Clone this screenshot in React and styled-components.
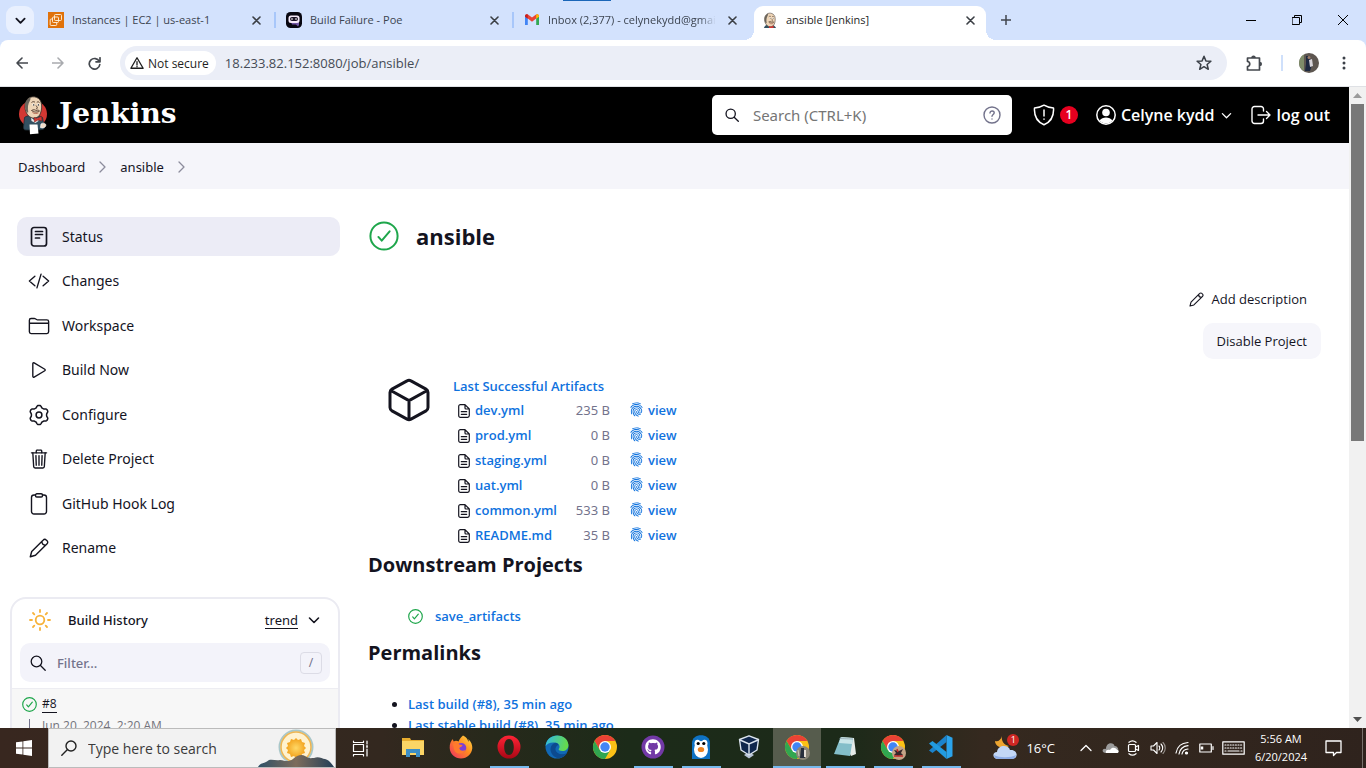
import React from "react";
import styled, { createGlobalStyle, css } from "styled-components";
import {
  IoCodeSlashOutline,
  IoFolderOutline,
  IoPlayOutline,
  IoTrashOutline,
  IoFingerPrint,
} from "react-icons/io5";
import { FaGithub } from "react-icons/fa";

const Global = createGlobalStyle`
  *, *::before, *::after { box-sizing: border-box; }
  body { margin: 0; font-family: "Noto Sans", "Open Sans", sans-serif; color: #14141f; background: #fff; }
  button { font: inherit; color: inherit; background: none; border: 0; padding: 0; cursor: pointer; }
  input { font: inherit; color: inherit; background: none; border: 0; padding: 0; outline: 0; min-width: 0; }
  a { color: inherit; text-decoration: none; }
  svg { display: block; flex: none; }
`;

const Screen = styled.div`
  display: flex;
  flex-direction: column;
  height: 100vh;
  overflow: hidden;
`;

/* ---------- Browser frame ---------- */
const chromeFont = css`
  font-family: "Open Sans", "Noto Sans", sans-serif;
`;
const TabStrip = styled.div`
  ${chromeFont}
  position: relative;
  display: flex;
  align-items: flex-end;
  height: 40px;
  padding-left: 6px;
  background: #d3e2fd;
  flex: none;
`;
const LoadingEdge = styled.span`
  position: absolute;
  top: 0;
  left: 563px;
  width: 48px;
  height: 1px;
  background: #1a66b8;
`;
const TabSearch = styled.button`
  display: grid;
  place-items: center;
  width: 28px;
  height: 28px;
  margin: 0 6px 6px 0;
  border-radius: 9px;
  background: #e9f0fe;
`;
const Tab = styled.div`
  position: relative;
  display: flex;
  align-items: center;
  gap: 8px;
  flex: 0 1 232px;
  min-width: 0;
  height: 34px;
  padding: 0 8px 6px;
  color: #3c4450;
  ${(p) =>
    p.$active &&
    css`
      background: #fff;
      color: #1f1f1f;
      border-radius: 9px 9px 0 0;
      &::before, &::after {
        content: "";
        position: absolute;
        bottom: 0;
        width: 10px;
        height: 10px;
      }
      &::before { left: -10px; background: radial-gradient(circle at 0 0, transparent 10px, #fff 10px); }
      &::after { right: -10px; background: radial-gradient(circle at 100% 0, transparent 10px, #fff 10px); }
    `}
`;
const TabTitle = styled.span`
  flex: 1;
  min-width: 0;
  overflow: hidden;
  white-space: nowrap;
  font-size: 11px;
  line-height: 18px;
  ${(p) => p.$fade && "mask-image: linear-gradient(90deg, #000 90%, transparent);"}
`;
const TabGap = styled.span`
  width: 6px;
  height: 28px;
  flex: none;
  margin-bottom: 6px;
  padding: 6px 2px;
  &::before {
    content: "";
    display: block;
    width: 2px;
    height: 16px;
    background: ${(p) => (p.$line ? "#a8c7fa" : "transparent")};
  }
`;
const PlainButton = styled.button`
  display: grid;
  place-items: center;
  flex: none;
  width: ${(p) => p.$w || 16}px;
  height: ${(p) => p.$h || 16}px;
`;
const NewTab = styled(PlainButton)`
  margin: 0 0 6px 6px;
`;
const WindowButtons = styled.div`
  display: flex;
  margin-left: auto;
`;
const Toolbar = styled.div`
  ${chromeFont}
  background: #d3e2fd;
  flex: none;
`;
const ToolbarInner = styled.div`
  display: flex;
  align-items: center;
  height: 47px;
  padding: 0 4px 0 8px;
  background: #fff;
  border-bottom: 1px solid #dfe1e5;
  border-radius: 8px 8px 0 0;
`;
const NavButton = styled(PlainButton)`
  width: 28px;
  height: 28px;
  margin-right: 8px;
`;
const Omnibox = styled.div`
  display: flex;
  align-items: center;
  flex: 1;
  height: 34px;
  margin-left: 4px;
  padding: 0 15px 0 5px;
  border-radius: 17px;
  background: #ebeef7;
`;
const Secure = styled.button`
  display: flex;
  align-items: center;
  gap: 4px;
  height: 24px;
  padding: 0 7px 0 5px;
  border-radius: 12px;
  background: #fff;
  font-size: 12px;
  color: #1f1f1f;
  white-space: nowrap;
`;
const Url = styled.input`
  flex: 1;
  margin-left: 9px;
  font-size: 13px;
  color: #454b55;
`;
const ToolbarLine = styled.span`
  width: 2px;
  height: 16px;
  margin-right: 9px;
  background: #cfe0fb;
`;

/* ---------- Page frame ---------- */
const Viewport = styled.div`
  display: flex;
  flex: 1;
  min-height: 0;
`;
const Page = styled.div`
  flex: 1;
  min-width: 0;
  overflow: hidden;
`;
const Scrollbar = styled.div`
  display: flex;
  flex-direction: column;
  align-items: center;
  width: 17px;
  flex: none;
  background: #f1f1f1;
`;
const ScrollThumb = styled.span`
  flex: 5;
  width: 13px;
  background: #787878;
`;
const ScrollRest = styled.span`
  flex: 4;
`;

/* ---------- Jenkins header ---------- */
const Header = styled.header`
  display: flex;
  align-items: center;
  height: 56px;
  padding: 0 19px 0 18px;
  background: #000;
  color: #fff;
`;
const Brand = styled.a`
  display: flex;
  align-items: center;
  gap: 10px;
  margin-right: auto;
  font: bold 28px/32px "DejaVu Serif", "Liberation Serif", serif;
`;
const BrandName = styled.span`
  padding-bottom: 3px;
`;
const HeaderSearch = styled.div`
  display: flex;
  align-items: center;
  flex: 0 1 300px;
  height: 40px;
  padding: 0 11px 0 13px;
  border-radius: 5px;
  background: #fff;
  color: #14141f;
`;
const HeaderInput = styled.input`
  flex: 1;
  margin-left: 14px;
  font-size: 15px;
  &::placeholder { color: #757575; opacity: 1; }
`;
const HeaderLink = styled.a`
  display: flex;
  align-items: center;
  gap: 5px;
  margin-left: ${(p) => p.$ml}px;
  ${chromeFont}
  font-size: 16px;
  line-height: 24px;
  font-weight: 600;
  white-space: nowrap;
`;
const Badge = styled.span`
  width: 18px;
  height: 18px;
  border-radius: 9px;
  background: #e6001f;
  font-size: 12px;
  line-height: 18px;
  text-align: center;
`;
const Crumbs = styled.nav`
  display: flex;
  align-items: center;
  gap: 14px;
  height: 46px;
  padding: 2px 18px 0;
  background: #f5f5fa;
  font-size: 13px;
  line-height: 20px;
`;
const Body = styled.div`
  display: flex;
  align-items: flex-start;
`;

/* ---------- Side panel ---------- */
const Side = styled.aside`
  flex: none;
  width: 340px;
  padding: 28px 0 0 10px;
`;
const SideNav = styled.nav`
  display: flex;
  flex-direction: column;
  justify-content: space-between;
  min-height: 351px;
  margin-left: 7px;
`;
const SideLink = styled.a`
  display: flex;
  align-items: center;
  gap: 12px;
  height: 39px;
  padding-left: 11px;
  border-radius: 10px;
  font-size: 14px;
  line-height: 20px;
  background: ${(p) => (p.$active ? "#ececf6" : "transparent")};
`;
const IconBox = styled.span`
  display: grid;
  place-items: center;
  width: 22px;
  height: 22px;
  flex: none;
`;
const History = styled.section`
  margin-top: 29px;
  border: 2px solid #ebebf2;
  border-radius: 16px 16px 0 0;
  overflow: hidden;
`;
const HistoryHead = styled.div`
  display: flex;
  align-items: center;
  height: 42px;
  padding: 0 16px 0 17px;
  font-size: 13px;
  line-height: 20px;
`;
const HistoryTitle = styled.span`
  flex: 1;
  margin-left: 17px;
  font-weight: 500;
`;
const Underlined = styled.a`
  border-bottom: 1px solid #14141f;
  line-height: 16px;
`;
const HistoryToggle = styled(PlainButton)`
  margin-left: 8px;
`;
const Filter = styled.label`
  display: flex;
  align-items: center;
  height: 39px;
  margin: 2px 8px 6px;
  padding: 0 8px 0 10px;
  border-radius: 10px;
  background: #f3f3fa;
`;
const FilterInput = styled.input`
  flex: 1;
  margin-left: 11px;
  font-size: 13px;
  font-weight: 500;
  &::placeholder { color: #73738c; opacity: 1; }
`;
const KeyHint = styled.kbd`
  width: 22px;
  height: 22px;
  border: 1px solid #dcdce6;
  border-radius: 4px;
  font: 12px/20px "Noto Sans", sans-serif;
  text-align: center;
  color: #73738c;
`;
const Build = styled.div`
  display: grid;
  grid-template-columns: 15px 1fr;
  column-gap: 5px;
  align-items: center;
  padding: 5px 10px 12px;
  border-top: 1px solid #ededf2;
  background: #f7f7f7;
  ${chromeFont}
  font-size: 12px;
  line-height: 20px;
`;
const BuildLine = styled.span`
  width: 1px;
  height: 14px;
  justify-self: center;
  background: #73738c;
`;
const BuildDate = styled.time`
  color: #73737c;
  line-height: 24px;
`;

/* ---------- Main panel ---------- */
const Main = styled.main`
  flex: 1;
  min-width: 0;
  padding: 27px 28px 0;
`;
const TitleRow = styled.div`
  display: flex;
  align-items: center;
  gap: 17px;
  padding-left: 1px;
`;
const Title = styled.h1`
  margin: 0;
  ${chromeFont}
  font-size: 22px;
  line-height: 40px;
  font-weight: 700;
`;
const Actions = styled.div`
  display: flex;
  flex-direction: column;
  align-items: flex-end;
  gap: 6px;
  margin-top: 25px;
`;
const Action = styled.button`
  display: flex;
  align-items: center;
  gap: 8px;
  height: 36px;
  padding: 0 14px;
  border-radius: 10px;
  ${chromeFont}
  font-size: 13px;
  background: ${(p) => (p.$filled ? "#f6f6fb" : "transparent")};
`;
const Artifacts = styled.section`
  display: flex;
  gap: 23px;
  margin: 17px 0 0 20px;
`;
const blueLink = css`
  color: #0f72de;
  font-family: "Open Sans", "Noto Sans", sans-serif;
  font-size: 13px;
  font-weight: 600;
`;
const BlueLink = styled.a`
  ${blueLink}
`;
const CubeBox = styled.div`
  padding-top: 2px;
`;
const ArtifactTitle = styled.div`
  font-size: 13px;
  line-height: 21px;
`;
const FileTable = styled.table`
  border-collapse: collapse;
  font-size: 13px;
  line-height: 20px;
  td { height: 25px; padding: 0; vertical-align: middle; }
`;
const IconCell = styled.td`
  width: 22px;
  svg { margin: 3px 0 0 5px; }
`;
const SizeCell = styled.td`
  width: 53px;
  text-align: right;
  color: #73738c;
`;
const ViewCell = styled.td`
  ${blueLink}
  a { display: flex; align-items: center; gap: 4px; padding-left: 19px; }
`;
const Heading = styled.h2`
  margin: 2px 0 25px;
  ${chromeFont}
  font-size: 20px;
  line-height: 32px;
  font-weight: 700;
`;
const Projects = styled.ul`
  list-style: none;
  margin: 0 0 10px;
  padding-left: 40px;
  li { display: flex; align-items: center; gap: 12px; line-height: 21px; }
`;
const Permalinks = styled.ul`
  margin: 0;
  padding-left: 40px;
  li { line-height: 21px; font-size: 13px; }
`;

/* ---------- Taskbar ---------- */
const Taskbar = styled.div`
  ${chromeFont}
  display: flex;
  height: 40px;
  flex: none;
  background: linear-gradient(90deg, #38271f 0%, #33281f 28%, #27291b 36%, #1c2b19 46%, #1c2a19 62%, #35291f 72%, #2f231d 100%);
  color: #fff;
`;
const TaskButton = styled.button`
  display: grid;
  place-items: center;
  width: 48px;
  height: 40px;
  flex: none;
  background: ${(p) => (p.$active ? "#565c4d" : "transparent")};
`;
const AppButton = styled(TaskButton)`
  grid-template-rows: 1fr auto;
  &::after {
    content: "";
    width: ${(p) => (p.$active ? 48 : 39)}px;
    height: 2px;
    background: ${(p) => (p.$open || p.$active ? "#76b9ed" : "transparent")};
  }
`;
const TaskSearch = styled.label`
  display: flex;
  align-items: center;
  flex: 0 1 288px;
  min-width: 0;
  padding-left: 12px;
  border: 1px solid #bbb;
  background: #f2f2f2;
  color: #222;
`;
const TaskInput = styled.input`
  flex: 1;
  margin-left: 11px;
  font-size: 14px;
  &::placeholder { color: #3b3b3b; opacity: 1; }
`;
const Apps = styled.div`
  display: flex;
  margin-left: 5px;
`;
const Tray = styled.div`
  display: flex;
  align-items: center;
  margin-left: auto;
  font-size: 13px;
`;
const TrayButton = styled(PlainButton)`
  height: 40px;
`;
const WeatherWrap = styled.span`
  position: relative;
`;
const AlertCount = styled.span`
  position: absolute;
  top: -1px;
  right: -1px;
  width: 12px;
  height: 12px;
  border-radius: 6px;
  background: #cf2723;
  font-size: 9px;
  line-height: 12px;
  text-align: center;
`;
const Temp = styled.span`
  margin: 0 23px 0 8px;
  white-space: nowrap;
`;
const Clock = styled.button`
  width: 72px;
  font-size: 11px;
  line-height: 18px;
  text-align: center;
`;
const ShowDesktop = styled(TrayButton)`
  margin-left: 13px;
  border-left: 1px solid #77706b;
`;

/* ---------- Drawings ---------- */
const Stroke = ({ size = 16, w, h, box = "0 0 16 16", sw = 1.4, color = "currentColor", children }) => (
  <svg width={w || size} height={h || size} viewBox={box} fill="none" stroke={color} strokeWidth={sw} strokeLinecap="round" strokeLinejoin="round" aria-hidden="true">
    {children}
  </svg>
);
const Close = () => <Stroke size={9} box="0 0 9 9" sw={1.6} color="#3b3f45"><path d="M1 1l7 7M8 1l-7 7" /></Stroke>;
const ChevronDown = ({ size = 12, sw = 1.6 }) => <Stroke size={size} box="0 0 12 12" sw={sw}><path d="M1.500 4L6 8.500 10.500 4" /></Stroke>;
const CrumbArrow = () => <Stroke w={7} h={12} box="0 0 7 12" sw={1.3} color="#8c8c9c"><path d="M1 1l5 5-5 5" /></Stroke>;
const Lens = ({ size = 16, sw = 1.5 }) => <Stroke size={size} sw={sw}><circle cx="6.500" cy="6.500" r="5.300" /><path d="M10.500 10.500l4.700 4.700" /></Stroke>;
const Check = ({ size, sw = 34 }) => (
  <Stroke size={size} box="0 0 512 512" sw={sw} color="#1ea64b"><circle cx="256" cy="256" r="232" /><path d="M352 176L217.600 336 160 272" /></Stroke>
);
const Pencil = ({ size = 20, sw = 1.4 }) => (
  <Stroke size={size} box="0 0 20 20" sw={sw}>
    <path d="M1.300 18.700l1.400-5.200L14.300 1.900a2 2 0 0 1 2.900 0l.9.9a2 2 0 0 1 0 2.900L6.500 17.300zM12.800 3.500c.2 2.300 1.500 3.600 3.700 3.700" />
  </Stroke>
);
const gearPath = Array.from({ length: 72 }, (_, i) => {
  const a = (i * Math.PI) / 36;
  const r = 8.6 + 1.1 * Math.tanh(1.6 * Math.cos(6 * a));
  return `${(11 + r * Math.sin(a)).toFixed(2)} ${(11 - r * Math.cos(a)).toFixed(2)}`;
}).join("L");
const Gear = () => <Stroke size={22} box="0 0 22 22" sw={1.5}><path d={`M${gearPath}Z`} /><circle cx="11" cy="11" r="2.900" /></Stroke>;
const FileIcon = () => (
  <Stroke w={12} h={14} box="0 0 12 14" sw={1.2}><path d="M7 .7H2.400A1.700 1.700 0 0 0 .7 2.400v9.200a1.700 1.700 0 0 0 1.700 1.700h7.200a1.700 1.700 0 0 0 1.700-1.700V5zM7 .7V4a1 1 0 0 0 1 1h3.300M3.300 7.700h5.400M3.300 10.300h5.400" /></Stroke>
);
const Ec2 = () => (
  <svg width="16" height="16" viewBox="0 0 16 16"><rect width="16" height="16" fill="#e0720b" /><g fill="none" stroke="#fff3e0" strokeWidth=".9"><rect x="6.500" y="2.500" width="7" height="6" rx="1" /><rect x="4.500" y="5" width="6" height="5.500" rx="1" /><path d="M4.500 7H3.200c-.6 0-1 .3-1 .9v4.700c0 .5.300.9.900.9h4.700c.6 0 .9-.4.9-.9v-2" /></g></svg>
);
const Poe = () => (
  <svg width="16" height="16" viewBox="0 0 16 16"><rect width="16" height="16" rx="4.500" fill="#080711" /><path d="M5 10h8v3l-1 1.500-2-2H6z" fill="#7457a5" /><rect x="2.500" y="3.500" width="11" height="7.500" rx="2.500" fill="#f5e9f8" /><rect x="4" y="5" width="8" height="4" rx="2" fill="#1c1526" /><path d="M6 6.200v1.500M10 6.200v1.500" stroke="#fff" strokeWidth="1.300" /></svg>
);
const Gmail = () => (
  <svg width="16" height="16" viewBox="0 0 16 16"><path d="M1 3v10h2.800V6z" fill="#4285f4" /><path d="M15 3v10h-2.800V6z" fill="#34a853" /><path d="M1 4.200C1 2 3.200 1.800 4.300 2.700L8 5.600l3.700-2.900C12.800 1.800 15 2 15 4.200L8 9.800z" fill="#ea4335" /><path d="M12.200 2.500C13.500 1.800 15 2.500 15 4.200v.6l-2.800 2z" fill="#fbbc04" /><path d="M3.800 2.500C2.500 1.800 1 2.500 1 4.200v.6l2.800 2z" fill="#c5221f" /></svg>
);
const ButlerHead = () => (
  <g>
    <path d="M9 5c3-5 12-4 14 2 1.200 4 .8 8-.8 12-1.500 3.500-6 5-9.200 3.500C9 20.500 7 16 7 12c0-3 .5-5 2-7z" fill="#eed5b7" stroke="#362e28" strokeWidth=".8" />
    <path d="M9 5C6.500 8 6.500 12 8 16c.8 1.500 2 2 2.300 1.300C9.500 13 9.800 9 12 5.500c1-2 .5-3-.5-2.500z" fill="#6b655c" />
    <circle cx="15.500" cy="9.700" r="1.100" fill="#fff" /><circle cx="20.300" cy="9.700" r="1.100" fill="#fff" />
    <circle cx="15.700" cy="9.900" r=".7" /><circle cx="20.400" cy="9.900" r=".7" />
    <path d="M13.500 7.500c1-1 2.500-1 3.500-.3M18.800 7.300c1-.7 2-.5 2.700.2M18 10.500c1.500 2 2 3 .2 3.300M13.500 15.500c2-1.200 4-.8 4.500.2 1-.9 2.700-.7 3.500.3-2 1.300-5 1.700-8-.5z" fill="none" stroke="#4a3327" strokeWidth=".9" />
    <path d="M14.500 17.500c2 1.300 4 1.300 6 .3" stroke="#a9563f" strokeWidth=".8" fill="none" />
  </g>
);
const Jenkins = () => (
  <svg width="31" height="40" viewBox="0 0 31 40" aria-hidden="true">
    <ellipse cx="15" cy="19" rx="14" ry="13.500" fill="#d33833" />
    <path d="M6.500 22.500c3-3 15-3 18 0l1.500 9c.4 3-1 3-2 3L20 35H8c-2 0-2.500-1-2.500-3z" fill="#335061" stroke="#1f2d36" strokeWidth=".8" />
    <path d="M13 22l3 3 4-2 .5 3-3 2-4-2z" fill="#e8e8e8" />
    <ButlerHead />
    <path d="M16 22.500l3 .9 4.500-2.200.5 4.600-4-.9-3.500 2.200z" fill="#d33833" stroke="#7c1d1a" strokeWidth=".5" />
    <path d="M11.500 29.500h8l1 9-8.500.8z" fill="#fff" />
    <path d="M23 29c2-1.500 5-1 4.800 1.500-.2 2-3 3-5.300 2z" fill="#f3dcc6" stroke="#fff" strokeWidth=".7" />
  </svg>
);
const JenkinsSmall = () => (
  <svg width="16" height="16" viewBox="5 0 21 25"><path d="M6 25c1-4 4-6 9-6s8 2 10 6z" fill="#335061" /><ButlerHead /><path d="M14 22l3 1 4-2v4h-7z" fill="#d33833" /></svg>
);
const StatusIcon = () => (
  <Stroke size={22} box="0 0 22 22" sw={1.7}><rect x="3.500" y="1.500" width="15" height="18.500" rx="2.500" /><path d="M7.500 5.500h7M7.500 8.500h7M7.500 12h4" /></Stroke>
);
const ClipboardIcon = () => (
  <Stroke size={22} box="0 0 22 22" sw={1.4}><path d="M7.500 2H6a2.500 2.500 0 0 0-2.500 2.500v14A2.500 2.500 0 0 0 6 21h10a2.500 2.500 0 0 0 2.500-2.500v-14A2.500 2.500 0 0 0 16 2h-1.500" /><rect x="7.500" y=".8" width="7" height="3.200" rx="1.300" /></Stroke>
);
const Sun = () => (
  <Stroke size={22} box="0 0 22 22" sw={1.8} color="#f7b239"><circle cx="11" cy="11" r="4.300" /><path d="M11 1v2M11 19v2M1 11h2M19 11h2M4 4l1.300 1.300M16.700 16.700L18 18M4 18l1.300-1.300M16.700 5.300L18 4" /></Stroke>
);
const Cube = () => (
  <Stroke w={42} h={44} box="0 0 42 44" sw={3}><path d="M19 2.900a4 4 0 0 1 4 0l15 8.200a4 4 0 0 1 2 3.400v15a4 4 0 0 1-2 3.400L23 41.100a4 4 0 0 1-4 0L4 32.900a4 4 0 0 1-2-3.400v-15a4 4 0 0 1 2-3.400zM2.800 12.500L21 22.600 39.200 12.500M21 22.600V41" /></Stroke>
);

const Chrome = ({ avatar }) => (
  <svg width="28" height="28" viewBox="0 0 28 28">
    <circle cx="14" cy="14" r="12" fill="#fbc116" />
    <path d="M14 8h10.400A12 12 0 0 0 3.600 8l5.200 9z" fill="#e94235" />
    <path d="M3.600 8A12 12 0 0 0 14 26l5.200-9H8.800z" fill="#31a650" />
    <circle cx="14" cy="14" r="6" fill="#fff" /><circle cx="14" cy="14" r="4.700" fill="#4285f4" />
    {avatar === "photo" && <g><circle cx="20" cy="20" r="7" fill="#8b8678" /><path d="M18 15h3v3l1 7h-5z" fill="#29303d" /><path d="M21 17h2v7h-2z" fill="#e5ded6" /><path d="M15 17l1 6" stroke="#c9c5b4" /></g>}
    {avatar === "bird" && <g><circle cx="20" cy="20" r="7" fill="#c4a487" /><path d="M15 17l5 1 4-2-2 4 2 2-5 1-4-1 2-2z" fill="#34272b" /><path d="M15 23h9M18 16l1 3" stroke="#c12b2b" strokeWidth="1.500" /></g>}
  </svg>
);
const Explorer = () => (
  <svg width="24" height="24" viewBox="0 0 24 24"><path d="M1 3h8l1 2h13v15H1z" fill="#e8ad2f" /><path d="M1 6h22v14H1z" fill="#fbd566" /><path d="M5 22v-8h14v8h-4v-4H9v4z" fill="#3c8ec6" /></svg>
);
const Firefox = () => (
  <svg width="24" height="24" viewBox="0 0 24 24"><defs><linearGradient id="fx" x1="1" y1="0" x2="0" y2="1"><stop offset="0" stopColor="#ffe14a" /><stop offset=".45" stopColor="#ff8b1f" /><stop offset="1" stopColor="#f02a67" /></linearGradient></defs>
    <path d="M14 .5c4 2 4.500 4 5.500 6.500.3-1 .2-2-.2-3 3 3 4.200 6 4 9.300C22.800 19 18 23.500 12 23.500S1 19 .7 13C.5 9 2 5.500 4 4c0 1.200.3 1.800.8 2.500C6 5.500 8 5.500 9.500 6.500 11 3.500 12 2 14 .5z" fill="url(#fx)" /><circle cx="12.300" cy="13" r="5" fill="#7b3fd6" /><path d="M4 9c3-2 5-1 7 .8 1.500 0 2.500.4 2.500 1-1 1.400-2.700 1-3.200 2.400.8 2.800 4 3.300 6.700 1.300-1 4.500-9 6-11.500 1C4.800 14 4.500 11 4 9z" fill="#ff7a2d" /></svg>
);
const Opera = () => (
  <svg width="24" height="24" viewBox="0 0 24 24"><defs><linearGradient id="op" x1="0" y1="0" x2="0" y2="1"><stop offset="0" stopColor="#ff2436" /><stop offset="1" stopColor="#a90715" /></linearGradient></defs><path fillRule="evenodd" d="M12 .5a11.500 11.500 0 1 0 0 23 11.500 11.500 0 0 0 0-23zm0 3.500c3 0 4.800 3.500 4.800 8S15 20 12 20s-4.800-3.500-4.800-8S9 4 12 4z" fill="url(#op)" /></svg>
);
const Edge = () => (
  <svg width="24" height="24" viewBox="0 0 24 24"><defs><linearGradient id="ed" x1="0" y1="0" x2="1" y2=".2"><stop offset="0" stopColor="#2fb9e9" /><stop offset="1" stopColor="#65d94c" /></linearGradient></defs><circle cx="12" cy="12" r="11.500" fill="#1168b5" /><path d="M.6 11C2-3 22-2.500 23.400 9.500c.4 4-2.600 6.500-6 6.500-3 0-4-1-3.700-2 1.800-2 .8-5.500-3-6.300C6 6.800 2 8.500.6 11z" fill="url(#ed)" /><path d="M10.700 7.700C6.500 8.500 4.500 13 6 17c1.300 4 5.500 6.500 9 6 3-.8 5.500-2.500 7-5-5 2.500-10.500 1-11.500-3-.5-2.700 1.300-4.500 3-5-.5-1.300-1.300-2-2.800-2.300z" fill="#0c4a8f" /></svg>
);
const Github = () => <svg width="24" height="24" viewBox="0 0 24 24"><circle cx="12" cy="12" r="11.500" fill="#7239a6" /><g transform="translate(4 4)"><FaGithub size={16} color="#fff" /></g></svg>;
const Penguin = () => (
  <svg width="20" height="24" viewBox="0 0 20 24"><path d="M1 24V8C1-2.500 19-2.500 19 8v16z" fill="#0e72c4" /><ellipse cx="10" cy="14.500" rx="7" ry="8.500" fill="#fff" /><ellipse cx="6.500" cy="8.500" rx="3" ry="3.800" fill="#fff" /><ellipse cx="13.500" cy="8.500" rx="3" ry="3.800" fill="#fff" /><circle cx="7.200" cy="8.500" r="1.600" /><circle cx="12.800" cy="8.500" r="1.600" /><ellipse cx="10" cy="14.500" rx="3.200" ry="2.600" fill="#ee8422" /></svg>
);
const VBox = () => (
  <svg width="22" height="24" viewBox="0 0 22 24"><path d="M6 20l5-3 5 3-5 3.500z" fill="#b8c4d6" /><path d="M1.500 4.500L11 .8l9.500 3.700L19 15l-8 5-8-5z" fill="#10284d" stroke="#dce5ef" strokeWidth="1.400" strokeLinejoin="round" /><path d="M2 5l9 4 9-4M11 9v10" stroke="#dce5ef" strokeWidth="1.400" fill="none" /></svg>
);
const Notepad = () => (
  <svg width="24" height="24" viewBox="0 0 24 24"><path d="M8 2l13 1 2 16-5 2z" fill="#e5ebe8" /><path d="M7.500 2.500L20 3l-3 18-16-2z" fill="#83bec9" /><path d="M7.500 2.500L20 3l-1 6-13-1z" fill="#c9e6e9" /><path d="M6.500 3.500l13 .5" stroke="#71818c" strokeDasharray="1 1" /></svg>
);
const VsCode = () => (
  <svg width="26" height="26" viewBox="0 0 26 26"><path d="M18.500 1l6 2.800v18.400l-6 2.800z" fill="#2ba4ec" /><path d="M18.500 1v7L4.500 19 1 16.500z" fill="#1b83cc" /><path d="M18.500 25v-7L4.500 7 1 9.500z" fill="#229be0" /></svg>
);
const Weather = () => (
  <svg width="26" height="26" viewBox="0 0 26 26"><path d="M10 1c-1 5 2 9 7 10-5 4-14 1-14-5 3 1 6-1 7-5z" fill="#eda531" /><path d="M6 24c-6 0-6-7-1-7 1-8 12-7 13-2 8-1 9 9 2 9z" fill="#c3d7f6" /><path d="M2 20c5 3 17 3 22 0-.6 2.800-2 4-4 4H6c-2 0-3.500-1-4-4z" fill="#8faee7" /></svg>
);
const SunScene = () => (
  <svg width="80" height="38" viewBox="0 0 80 38" aria-hidden="true">
    <defs><radialGradient id="sun"><stop offset="0" stopColor="#ffd866" /><stop offset="1" stopColor="#f2a11b" /></radialGradient><linearGradient id="hill" x1="0" x2="1"><stop offset="0" stopColor="#2e5067" /><stop offset=".5" stopColor="#7d6c5b" /><stop offset="1" stopColor="#243f58" /></linearGradient></defs>
    <g transform="translate(2 0)">
      <circle cx="39" cy="18" r="16.500" fill="#f6e7c4" stroke="#a9c7c9" strokeWidth="2" /><circle cx="39" cy="18" r="15" fill="#fff2cf" stroke="#edb552" strokeWidth="1.500" />
      <path d="M39 9l2 2 3-1 1 3 3 1-1 3 2 2-2 2 1 3-3 1-1 3-3-1-2 2-2-2-3 1-1-3-3-1 1-3-2-2 2-2-1-3 3-1 1-3 3 1z" fill="url(#sun)" />
    </g>
    <path d="M3 38c3-5 7-3 11-7 4-1 7 1 11 0 6 1 9 2 13-1 4-4 9-5 12-3 4 3 6 2 9 2 5-2 8 1 11 1 4 1 6 4 9 8z" fill="url(#hill)" />
  </svg>
);
const TriangleUp = ({ color }) => <svg width="9" height="5" viewBox="0 0 9 5"><path d="M4.500 0L9 5H0z" fill={color} /></svg>;
const TriangleDown = ({ color }) => <svg width="9" height="5" viewBox="0 0 9 5"><path d="M4.500 5L0 0h9z" fill={color} /></svg>;

/* ---------- Data ---------- */
const tabs = [
  { title: "Instances | EC2 | us-east-1", icon: <Ec2 />, line: true },
  { title: "Build Failure - Poe", icon: <Poe />, line: true },
  { title: "Inbox (2,377) - celynekydd@gmail.com", icon: <Gmail />, fade: true },
  { title: "ansible [Jenkins]", icon: <JenkinsSmall />, active: true },
];
const links = [
  ["Status", <StatusIcon />],
  ["Changes", <IoCodeSlashOutline size={22} />],
  ["Workspace", <IoFolderOutline size={22} />],
  ["Build Now", <IoPlayOutline size={22} />],
  ["Configure", <Gear />],
  ["Delete Project", <IoTrashOutline size={22} />],
  ["GitHub Hook Log", <ClipboardIcon />],
  ["Rename", <Pencil />],
];
const files = [
  ["dev.yml", "235 B"],
  ["prod.yml", "0 B"],
  ["staging.yml", "0 B"],
  ["uat.yml", "0 B"],
  ["common.yml", "533 B"],
  ["README.md", "35 B"],
];
const apps = [
  { name: "File Explorer", icon: <Explorer /> },
  { name: "Firefox", icon: <Firefox /> },
  { name: "Opera", icon: <Opera />, open: true },
  { name: "Edge", icon: <Edge /> },
  { name: "Chrome", icon: <Chrome /> },
  { name: "GitHub Desktop", icon: <Github />, open: true },
  { name: "Penguin", icon: <Penguin />, open: true },
  { name: "VirtualBox", icon: <VBox /> },
  { name: "Chrome, first profile", icon: <Chrome avatar="photo" />, active: true },
  { name: "Notepad", icon: <Notepad />, open: true },
  { name: "Chrome, second profile", icon: <Chrome avatar="bird" />, open: true },
  { name: "Visual Studio Code", icon: <VsCode />, open: true },
];

function BrowserFrame() {
  return (
    <>
      <TabStrip>
        <LoadingEdge />
        <TabSearch aria-label="Search tabs"><ChevronDown size={11} sw={2} /></TabSearch>
        {tabs.map((t) => (
          <React.Fragment key={t.title}>
            <Tab $active={t.active}>
              {t.icon}
              <TabTitle $fade={t.fade}>{t.title}</TabTitle>
              <PlainButton aria-label="Close tab"><Close /></PlainButton>
            </Tab>
            {!t.active && <TabGap $line={t.line} />}
          </React.Fragment>
        ))}
        <NewTab $w={28} $h={28} aria-label="New tab"><Stroke size={10} box="0 0 10 10" sw={1.5} color="#41464d"><path d="M5 0v10M0 5h10" /></Stroke></NewTab>
        <WindowButtons>
          <PlainButton $w={46} $h={40} aria-label="Minimize"><Stroke size={10} box="0 0 10 10" sw={1} color="#000"><path d="M0 5.500h10" /></Stroke></PlainButton>
          <PlainButton $w={46} $h={40} aria-label="Restore"><Stroke size={10} box="0 0 10 10" sw={1} color="#000"><path d="M.5 2.500h7v7h-7zM2.500 2.500v-2h7v7h-2" /></Stroke></PlainButton>
          <PlainButton $w={46} $h={40} aria-label="Close window"><Stroke size={10} box="0 0 10 10" sw={1} color="#000"><path d="M0 0l10 10M10 0L0 10" /></Stroke></PlainButton>
        </WindowButtons>
      </TabStrip>
      <Toolbar>
        <ToolbarInner>
          <NavButton aria-label="Back"><Stroke size={12} box="0 0 12 12" sw={1.6} color="#44484e"><path d="M11.500 6H1M6 1L1 6l5 5" /></Stroke></NavButton>
          <NavButton aria-label="Forward"><Stroke size={12} box="0 0 12 12" sw={1.6} color="#a9abaf"><path d="M.5 6H11M6 1l5 5-5 5" /></Stroke></NavButton>
          <NavButton aria-label="Reload"><Stroke size={13} box="0 0 13 13" sw={1.7} color="#44484e"><path d="M11.300 4.500A5.300 5.300 0 1 0 11.800 7.500M12 .8v4H8" /></Stroke></NavButton>
          <Omnibox>
            <Secure><Stroke size={14} sw={1.5}><path d="M8 2L1 14h14zM8 6.500v3.700M8 12v.2" /></Stroke>Not secure</Secure>
            <Url aria-label="Address" defaultValue="18.233.82.152:8080/job/ansible/" />
            <PlainButton aria-label="Bookmark"><Stroke size={16} sw={1.5} color="#3b4048"><path d="M8 1.300l1.900 4.600 5 .4-3.800 3.200 1.200 4.800L8 11.700l-4.300 2.600 1.200-4.800L1.100 6.300l5-.4z" /></Stroke></PlainButton>
          </Omnibox>
          <PlainButton $w={54} $h={34} aria-label="Extensions"><Stroke size={17} box="0 0 17 17" sw={1.7} color="#44484e"><path d="M1.500 3h12v12h-12v-3.500c3-.3 3-4.700 0-5zM6 3c0-2.300 3-2.300 3 0M13.500 7.500c2.300 0 2.300 3 0 3" /></Stroke></PlainButton>
          <ToolbarLine />
          <PlainButton $w={34} $h={34} aria-label="Profile">
            <svg width="20" height="20" viewBox="0 0 20 20"><circle cx="10" cy="10" r="10" fill="#5d5650" /><path d="M0 10a10 10 0 0 1 5-8.500V18A10 10 0 0 1 0 10z" fill="#7f8c69" /><path d="M7 3h2l3 4 1 5-2 6H6l1-7z" fill="#1e2940" /><path d="M10 7l3-1 1 7-3 1z" fill="#d9d6da" /><circle cx="10" cy="4.500" r="1.500" fill="#9a7a68" /></svg>
          </PlainButton>
          <PlainButton $w={36} $h={34} aria-label="Menu"><svg width="4" height="14" viewBox="0 0 4 14" fill="#3b4048"><circle cx="2" cy="2" r="1.500" /><circle cx="2" cy="7" r="1.500" /><circle cx="2" cy="12" r="1.500" /></svg></PlainButton>
        </ToolbarInner>
      </Toolbar>
    </>
  );
}

function JenkinsHeader() {
  return (
    <Header>
      <Brand href="#"><Jenkins /><BrandName>Jenkins</BrandName></Brand>
      <HeaderSearch>
        <Lens size={14} sw={1.5} />
        <HeaderInput aria-label="Search" placeholder="Search (CTRL+K)" />
        <PlainButton $w={18} $h={18} aria-label="Search help"><Stroke size={18} box="0 0 18 18" sw={1.4} color="#73738c"><circle cx="9" cy="9" r="8" /><path d="M7 7c0-2.800 4.200-2.500 4.200-.2C11.200 8.500 9 8.400 9 10.300M9 13v.1" /></Stroke></PlainButton>
      </HeaderSearch>
      <HeaderLink href="#" $ml={21}><Stroke size={22} box="0 0 22 22" sw={1.5}><path d="M11 1.200c3 1.900 6 2.600 9.500 2.800.5 7-2 13.500-9.500 16.800C3.500 17.500 1 11 1.500 4 5 3.800 8 3.100 11 1.200zM11 6v6M11 15v.2" /></Stroke><Badge>1</Badge></HeaderLink>
      <HeaderLink href="#" $ml={18}><svg width="20" height="20" viewBox="0 0 20 20"><circle cx="10" cy="10" r="9.200" fill="none" stroke="#fff" strokeWidth="1.500" /><circle cx="10" cy="7.500" r="3.800" fill="#fff" /><path d="M3.500 15.500c3-4 10-4 13 0-3.500 4-9.500 4-13 0z" fill="#fff" /></svg>Celyne kydd</HeaderLink>
      <HeaderLink as="button" $ml={7} aria-label="User menu"><ChevronDown size={11} sw={1.4} /></HeaderLink>
      <HeaderLink href="#" $ml={19}><Stroke size={20} box="0 0 20 20" sw={1.4}><path d="M12.500 6V4A2.500 2.500 0 0 0 10 1.500H3.500A2.500 2.500 0 0 0 1 4v12a2.500 2.500 0 0 0 2.500 2.500H10a2.500 2.500 0 0 0 2.500-2.500v-2M7 10h12M15.500 6.500L19 10l-3.500 3.500" /></Stroke>log out</HeaderLink>
    </Header>
  );
}

function SidePanel() {
  return (
    <Side>
      <SideNav>
        {links.map(([label, icon], i) => (
          <SideLink key={label} href="#" $active={i === 0}><IconBox>{icon}</IconBox>{label}</SideLink>
        ))}
      </SideNav>
      <History>
        <HistoryHead>
          <Sun />
          <HistoryTitle>Build History</HistoryTitle>
          <Underlined href="#">trend</Underlined>
          <HistoryToggle aria-label="Collapse"><ChevronDown /></HistoryToggle>
        </HistoryHead>
        <Filter>
          <Lens size={16} sw={1.3} />
          <FilterInput aria-label="Filter builds" placeholder="Filter..." />
          <KeyHint>/</KeyHint>
        </Filter>
        <Build>
          <Check size={15} sw={40} />
          <span><Underlined href="#">#8</Underlined></span>
          <BuildLine />
          <BuildDate>Jun 20, 2024, 2:20 AM</BuildDate>
        </Build>
      </History>
    </Side>
  );
}

function MainPanel() {
  return (
    <Main>
      <TitleRow><Check size={30} /><Title>ansible</Title></TitleRow>
      <Actions>
        <Action><Pencil size={15} sw={1.5} />Add description</Action>
        <Action $filled>Disable Project</Action>
      </Actions>
      <Artifacts>
        <CubeBox><Cube /></CubeBox>
        <div>
          <ArtifactTitle><BlueLink href="#">Last Successful Artifacts</BlueLink></ArtifactTitle>
          <FileTable>
            <tbody>
              {files.map(([name, size]) => (
                <tr key={name}>
                  <IconCell><FileIcon /></IconCell>
                  <td><BlueLink href="#">{name}</BlueLink></td>
                  <SizeCell>{size}</SizeCell>
                  <ViewCell><a href="#"><IoFingerPrint size={15} />view</a></ViewCell>
                </tr>
              ))}
            </tbody>
          </FileTable>
        </div>
      </Artifacts>
      <Heading>Downstream Projects</Heading>
      <Projects><li><Check size={15} sw={40} /><BlueLink href="#">save_artifacts</BlueLink></li></Projects>
      <Heading>Permalinks</Heading>
      <Permalinks>
        <li><BlueLink href="#">Last build (#8), 35 min ago</BlueLink></li>
        <li><BlueLink href="#">Last stable build (#8), 35 min ago</BlueLink></li>
      </Permalinks>
    </Main>
  );
}

function WindowsTaskbar() {
  return (
    <Taskbar>
      <TaskButton aria-label="Start"><svg width="16" height="16" viewBox="0 0 16 16" fill="#fff"><path d="M0 2.300L6.500 1.400v6.200H0zM7.300 1.300L16 0v7.600H7.300zM0 8.400h6.500v6.200L0 13.700zM7.300 8.400H16V16l-8.700-1.300z" /></svg></TaskButton>
      <TaskSearch>
        <Stroke size={16} sw={1.4}><circle cx="10" cy="6" r="5" /><path d="M6.500 9.500L.8 15.200" /></Stroke>
        <TaskInput aria-label="Search Windows" placeholder="Type here to search" />
        <SunScene />
      </TaskSearch>
      <TaskButton aria-label="Task view"><Stroke size={17} box="0 0 17 17" sw={1.2}><path d="M1.500 4.500h10v7h-10zM1.500 1v1.500h10V1M1.500 16v-1.500h10V16M15 1v3M15 9v7" /><path d="M14.200 6.500h1.600" strokeWidth="2.500" strokeLinecap="butt" /></Stroke></TaskButton>
      <Apps>
        {apps.map((a) => <AppButton key={a.name} aria-label={a.name} $open={a.open} $active={a.active}>{a.icon}</AppButton>)}
      </Apps>
      <Tray>
        <WeatherWrap><Weather /><AlertCount>1</AlertCount></WeatherWrap>
        <Temp>16°C</Temp>
        <TrayButton aria-label="Hidden icons"><Stroke size={12} box="0 0 12 12" sw={1.3}><path d="M1 8.500l5-5 5 5" /></Stroke></TrayButton>
        <TrayButton $w={32} aria-label="OneDrive"><svg width="17" height="12" viewBox="0 0 17 12"><path d="M4 7C4 0 12 0 12.500 4 17 4 18 11 13 11H4C-1 11 0 6 4 7z" fill="#9b9b9b" /><path d="M4 11c-1-3 2-4 4-3 2-4 7-2 7 0 2.500 0 2 3 0 3z" fill="#fff" /></svg></TrayButton>
        <TrayButton $w={16} aria-label="Meet now"><Stroke size={16} sw={1.2}><rect x="2.500" y="4.500" width="7" height="7" rx="1" /><path d="M9.500 7l3-1.500v5L9.500 9M3 2.300C5 .7 8 .7 10 2.300M3 13.700c2 1.600 5 1.600 7 0" /></Stroke></TrayButton>
        <TrayButton $w={32} aria-label="Volume"><Stroke size={16} sw={1.1}><path d="M1 6h2.500L7 2.500v11L3.500 10H1zM9 6c1 1 1 3 0 4M11 4c2.200 2.200 2.200 5.800 0 8" /><path d="M13 2.500c3 3 3 8 0 11" opacity=".5" /></Stroke></TrayButton>
        <TrayButton $w={16} aria-label="Network"><Stroke size={14} box="0 0 14 14" sw={1.2}><path d="M1 12C2 6 6 2 13 1.500M4 13c.5-4.500 4-8 9-8.300M7 13c.5-2.700 2.500-4.700 6-5" /><circle cx="11.500" cy="12" r="1" fill="#fff" /></Stroke></TrayButton>
        <TrayButton $w={32} aria-label="Battery"><Stroke w={15} h={10} box="0 0 15 10" sw={1.2}><path d="M.8 1h11.500v8H.8zM14 3.500v3" /><path d="M3 3.500v3" strokeWidth="2.500" strokeLinecap="butt" /></Stroke></TrayButton>
        <TrayButton $w={23} aria-label="Touch keyboard"><Stroke w={23} h={14} box="0 0 23 14" sw={1.2}><path d="M.8.8h21.400v12.400H.8z" /><path d="M3 4h17M3 7h17" strokeDasharray="1 1.600" /><path d="M3 10h1M6 10h11M19 10h1" /></Stroke></TrayButton>
        <Clock>5:56 AM<br />6/20/2024</Clock>
        <TrayButton $w={32} aria-label="Notifications"><Stroke size={17} box="0 0 17 17" sw={1.3}><path d="M1 1h15v11.500h-4.500L8.500 15.500v-3H1z" /></Stroke></TrayButton>
        <ShowDesktop $w={4} aria-label="Show desktop" />
      </Tray>
    </Taskbar>
  );
}

export default function App() {
  return (
    <Screen>
      <Global />
      <BrowserFrame />
      <Viewport>
        <Page>
          <JenkinsHeader />
          <Crumbs><a href="#">Dashboard</a><CrumbArrow /><a href="#">ansible</a><CrumbArrow /></Crumbs>
          <Body><SidePanel /><MainPanel /></Body>
        </Page>
        <Scrollbar>
          <PlainButton $w={17} $h={17} aria-label="Scroll up"><TriangleUp color="#9b9b9b" /></PlainButton>
          <ScrollThumb />
          <ScrollRest />
          <PlainButton $w={17} $h={17} aria-label="Scroll down"><TriangleDown color="#505050" /></PlainButton>
        </Scrollbar>
      </Viewport>
      <WindowsTaskbar />
    </Screen>
  );
}
